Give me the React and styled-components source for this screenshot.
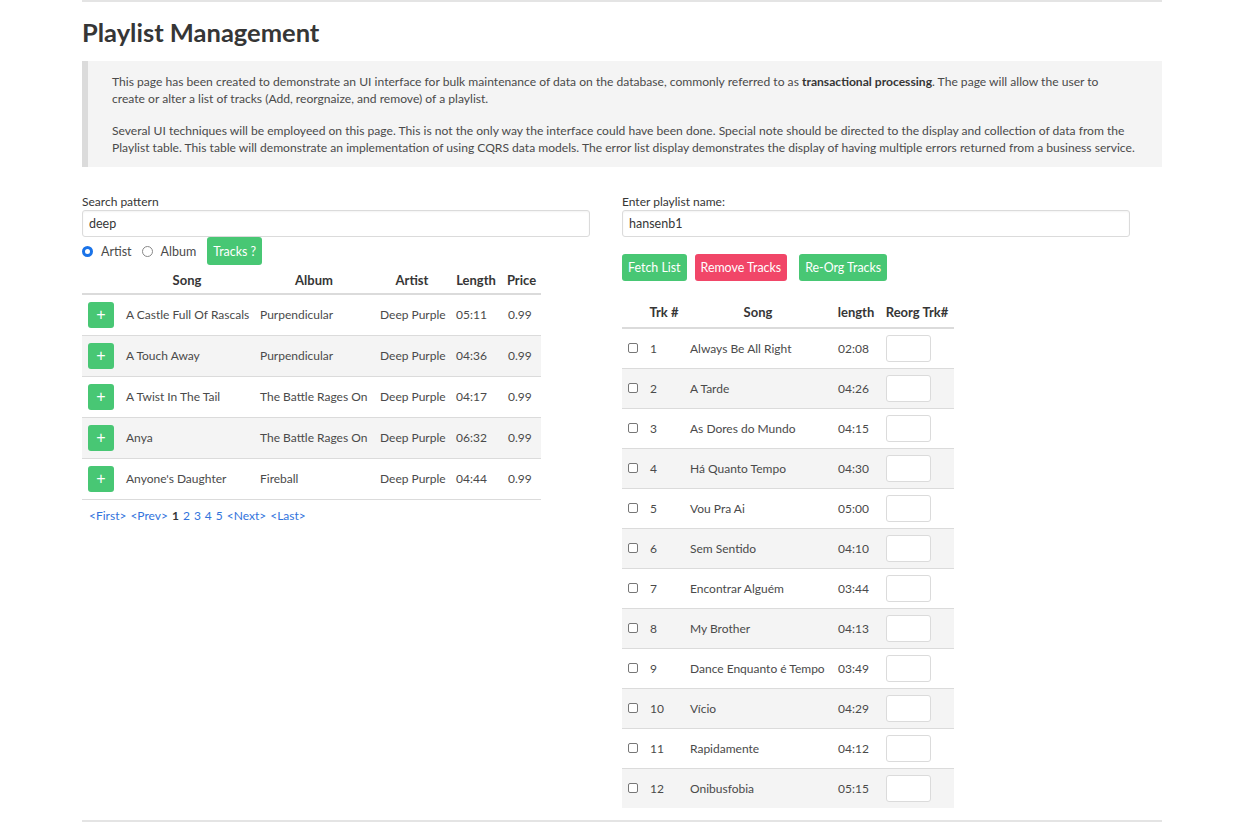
import styled, { createGlobalStyle } from "styled-components";

const Global = createGlobalStyle`
  body {
    margin: 0;
    background: #fff;
    font-family: "Segoe UI", Lato, "Liberation Sans", sans-serif;
    font-size: 12px;
    color: #4a4a4a;
  }
  * { box-sizing: border-box; }
`;

const Page = styled.main`
  width: 1080px;
  margin: 0 0 0 82px;
`;

const Rule = styled.hr`
  border: none;
  height: 2px;
  background: #e4e4e4;
  margin: ${(p) => (p.$bottom ? "12px 0 0" : "0")};
`;

const Title = styled.h1`
  font-size: 25.5px;
  font-weight: 700;
  color: #363636;
  margin: 0;
  padding: 14px 0 0;
  height: 59px;
  line-height: 32px;
`;

const Notice = styled.blockquote`
  margin: 0;
  background: #f4f4f4;
  border-left: 6px solid #dbdbdb;
  padding: 12px 20px 11px 24px;
  font-size: 12.1px;
  line-height: 17px;
  white-space: nowrap;

  p { margin: 0; }
  p + p { margin-top: 15px; }
  strong { color: #363636; }
`;

const Columns = styled.div`
  display: grid;
  grid-template-columns: 508px 508px;
  column-gap: 32px;
  margin-top: 26px;
  align-items: start;
`;

const Column = styled.section`
  display: flex;
  flex-direction: column;
`;

const Label = styled.label`
  font-size: 12px;
  line-height: 17px;
  color: #363636;
`;

const TextInput = styled.input`
  width: 100%;
  height: 27px;
  border: 1px solid #dbdbdb;
  border-radius: 3px;
  padding: 0 6px;
  font: inherit;
  font-size: 12.5px;
  color: #363636;
  box-shadow: inset 0 1px 2px rgba(10, 10, 10, 0.05);
  outline: none;
`;

const OptionRow = styled.div`
  display: flex;
  align-items: center;
  height: 28px;
`;

const Radio = styled.span`
  width: 11px;
  height: 11px;
  border-radius: 50%;
  border: ${(p) => (p.$on ? "3px solid #1a73e8" : "1px solid #888")};
  background: #fff;
  margin-right: 8px;
`;

const RadioText = styled.span`
  margin-right: 10px;
  color: #4a4a4a;
  font-size: 12.5px;
`;

const Button = styled.button`
  height: ${(p) => (p.$tall ? "28px" : "27px")};
  padding: 0 6px;
  border: none;
  border-radius: 3px;
  background: ${(p) => (p.$danger ? "#f14668" : "#48c774")};
  color: #fff;
  font: inherit;
  font-size: 12.4px;
  cursor: pointer;
`;

const Actions = styled.div`
  display: flex;
  gap: 8px;
  margin-top: 17px;

  & > :last-child { margin-left: 4px; }
`;

const Table = styled.table`
  border-collapse: collapse;
  table-layout: fixed;
  width: ${(p) => p.$width}px;
  margin-top: ${(p) => p.$top || 0}px;

  th {
    font-weight: 700;
    font-size: 13px;
    color: #363636;
    text-align: center;
    height: ${(p) => p.$head}px;
    border-bottom: 2px solid #dbdbdb;
    padding: 0;
    vertical-align: middle;
  }
  td {
    height: ${(p) => p.$row}px;
    padding: 0 6px;
    border-bottom: 1px solid #dbdbdb;
    white-space: nowrap;
    vertical-align: middle;
  }
  tbody tr:nth-child(even) td { background: #f4f4f4; }
  tbody tr:last-child td { border-bottom: ${(p) => (p.$noLast ? "none" : "1px solid #dbdbdb")}; }
`;

const AddButton = styled.button`
  width: 26px;
  height: 26px;
  border: none;
  border-radius: 3px;
  background: #48c774;
  color: #fff;
  font-size: 16px;
  line-height: 26px;
  padding: 0;
  display: block;
`;

const Box = styled.span`
  display: block;
  width: 10px;
  height: 10px;
  border: 1px solid #777;
  border-radius: 2px;
  background: #fff;
`;

const OrderInput = styled.input`
  display: block;
  width: 45px;
  height: 27px;
  border: 1px solid #dbdbdb;
  border-radius: 3px;
  background: #fff;
`;

const Pager = styled.div`
  padding: 7px 0 0 7px;
  line-height: 17px;
  font-size: 12px;
  display: flex;
  gap: 4px;
`;

const PageLink = styled.a`
  color: ${(p) => (p.$current ? "#363636" : "#3273dc")};
  font-weight: ${(p) => (p.$current ? 700 : 400)};
  text-decoration: none;
`;

const tracks = [
  ["A Castle Full Of Rascals", "Purpendicular", "05:11"],
  ["A Touch Away", "Purpendicular", "04:36"],
  ["A Twist In The Tail", "The Battle Rages On", "04:17"],
  ["Anya", "The Battle Rages On", "06:32"],
  ["Anyone's Daughter", "Fireball", "04:44"],
];

const playlist = [
  ["Always Be All Right", "02:08"],
  ["A Tarde", "04:26"],
  ["As Dores do Mundo", "04:15"],
  ["Há Quanto Tempo", "04:30"],
  ["Vou Pra Ai", "05:00"],
  ["Sem Sentido", "04:10"],
  ["Encontrar Alguém", "03:44"],
  ["My Brother", "04:13"],
  ["Dance Enquanto é Tempo", "03:49"],
  ["Vício", "04:29"],
  ["Rapidamente", "04:12"],
  ["Onibusfobia", "05:15"],
];

export default function App() {
  return (
    <Page>
      <Global />
      <Rule />
      <Title>Playlist Management</Title>
      <Notice>
        <p>
          This page has been created to demonstrate an UI interface for bulk maintenance of data on the
          database, commonly referred to as <strong>transactional processing</strong>. The page will allow the
          user to
          <br />
          create or alter a list of tracks (Add, reorgnaize, and remove) of a playlist.
        </p>
        <p>
          Several UI techniques will be employeed on this page. This is not the only way the interface could
          have been done. Special note should be directed to the display and collection of data from the
          <br />
          Playlist table. This table will demonstrate an implementation of using CQRS data models. The error
          list display demonstrates the display of having multiple errors returned from a business service.
        </p>
      </Notice>

      <Columns>
        <Column>
          <Label>Search pattern</Label>
          <TextInput defaultValue="deep" />
          <OptionRow>
            <Radio $on />
            <RadioText>Artist</RadioText>
            <Radio />
            <RadioText>Album</RadioText>
            <Button $tall style={{ marginLeft: 1 }}>Tracks ?</Button>
          </OptionRow>
          <Table $width={459} $head={28} $row={41} $top={1}>
            <colgroup>
              <col style={{ width: 38 }} />
              <col style={{ width: 134 }} />
              <col style={{ width: 120 }} />
              <col style={{ width: 76 }} />
              <col style={{ width: 52 }} />
              <col style={{ width: 39 }} />
            </colgroup>
            <thead>
              <tr>
                <th></th>
                <th>Song</th>
                <th>Album</th>
                <th>Artist</th>
                <th>Length</th>
                <th>Price</th>
              </tr>
            </thead>
            <tbody>
              {tracks.map(([song, album, len]) => (
                <tr key={song}>
                  <td><AddButton>+</AddButton></td>
                  <td>{song}</td>
                  <td>{album}</td>
                  <td>Deep Purple</td>
                  <td>{len}</td>
                  <td>0.99</td>
                </tr>
              ))}
            </tbody>
          </Table>
          <Pager>
            <PageLink>&lt;First&gt;</PageLink>
            <PageLink>&lt;Prev&gt;</PageLink>
            <PageLink $current>1</PageLink>
            <PageLink>2</PageLink>
            <PageLink>3</PageLink>
            <PageLink>4</PageLink>
            <PageLink>5</PageLink>
            <PageLink>&lt;Next&gt;</PageLink>
            <PageLink>&lt;Last&gt;</PageLink>
          </Pager>
        </Column>

        <Column>
          <Label>Enter playlist name:</Label>
          <TextInput defaultValue="hansenb1" />
          <Actions>
            <Button>Fetch List</Button>
            <Button $danger>Remove Tracks</Button>
            <Button>Re-Org Tracks</Button>
          </Actions>
          <Table $width={332} $head={31} $row={40} $top={16} $noLast>
            <colgroup>
              <col style={{ width: 22 }} />
              <col style={{ width: 40 }} />
              <col style={{ width: 148 }} />
              <col style={{ width: 48 }} />
              <col style={{ width: 74 }} />
            </colgroup>
            <thead>
              <tr>
                <th></th>
                <th>Trk #</th>
                <th>Song</th>
                <th>length</th>
                <th>Reorg Trk#</th>
              </tr>
            </thead>
            <tbody>
              {playlist.map(([song, len], i) => (
                <tr key={song}>
                  <td><Box /></td>
                  <td>{i + 1}</td>
                  <td>{song}</td>
                  <td>{len}</td>
                  <td><OrderInput /></td>
                </tr>
              ))}
            </tbody>
          </Table>
        </Column>
      </Columns>
      <Rule $bottom />
    </Page>
  );
}
